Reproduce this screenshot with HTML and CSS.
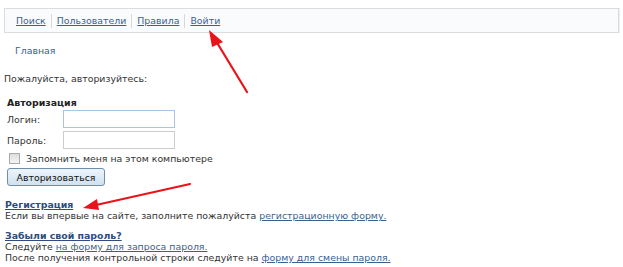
FILE: index.html
```html
<!DOCTYPE html>
<html lang="ru">
<head>
<meta charset="utf-8">
<link rel="stylesheet" href="styles.css">
</head>
<body>
<div class="page">
  <nav class="nav">
    <a href="#">Поиск</a><span class="sep"></span>
    <a href="#">Пользователи</a><span class="sep"></span>
    <a href="#">Правила</a><span class="sep"></span>
    <a href="#">Войти</a>
  </nav>
  <div class="crumb"><a href="#">Главная</a></div>
  <p class="intro">Пожалуйста, авторизуйтесь:</p>
  <form class="login">
    <div class="legend">Авторизация</div>
    <div class="row"><label class="lbl">Логин:</label><input class="field field-active" type="text"></div>
    <div class="row"><label class="lbl">Пароль:</label><input class="field" type="password"></div>
    <div class="remember"><span class="box"></span><span>Запомнить меня на этом компьютере</span></div>
    <button class="btn" type="button">Авторизоваться</button>
  </form>
  <div class="section">
    <a class="head" href="#">Регистрация</a>
    <div>Если вы впервые на сайте, заполните пожалуйста <a href="#">регистрационную форму.</a></div>
  </div>
  <div class="section">
    <a class="head" href="#">Забыли свой пароль?</a>
    <div>Следуйте <a href="#">на форму для запроса пароля.</a></div>
    <div>После получения контрольной строки следуйте на <a href="#">форму для смены пароля.</a></div>
  </div>
  <svg class="arrows" width="623" height="267" viewBox="0 0 623 267">
    <line x1="247" y1="92" x2="216" y2="41" stroke="#e8141a" stroke-width="2.2" stroke-linecap="round"/>
    <polygon points="209,30 223,42 212,47" fill="#e8141a"/>
    <line x1="190" y1="184" x2="96" y2="205" stroke="#e8141a" stroke-width="2.2" stroke-linecap="round"/>
    <polygon points="83,208 97,199 99,210" fill="#e8141a"/>
  </svg>
</div>
</body>
</html>
```
FILE: styles.css
```css
html, body {
  margin: 0;
  padding: 0;
  background: #fff;
}
.page {
  position: relative;
  width: 623px;
  height: 267px;
  overflow: hidden;
  font-family: "DejaVu Sans", Verdana, sans-serif;
  font-size: 9.4px;
  color: #333;
  line-height: 11px;
}
a {
  color: #3d5f8f;
  text-decoration: underline;
}
.nav {
  margin: 8px 4px 0 4px;
  height: 23px;
  border: 1px solid #dcdcdc;
  box-shadow: 1px 0 0 #eee;
  background: #fafbfd;
  display: flex;
  align-items: center;
  padding-left: 11px;
}
.sep {
  width: 1px;
  height: 14px;
  background: #d8d8d8;
  margin: 0 5px;
}
.crumb {
  padding: 12px 0 0 15px;
  height: 12px;
}
.crumb a {
  text-decoration: none;
}
.intro {
  margin: 16px 0 0 4px;
}
.login {
  margin: 13px 0 0 7px;
}
.legend {
  font-weight: bold;
  color: #222;
}
.row {
  display: flex;
  align-items: center;
  height: 20px;
  margin-top: 1px;
}
.lbl {
  width: 56px;
}
.field {
  box-sizing: border-box;
  width: 112px;
  height: 18px;
  border: 1px solid #ccc;
  margin: 0;
  padding: 0;
  background: #fff;
}
.field-active {
  border-color: #a9c6e0;
}
.remember {
  display: flex;
  align-items: center;
  gap: 6px;
  margin: 1px 0 0 2px;
  height: 14px;
}
.box {
  width: 9px;
  height: 9px;
  border: 1px solid #aaa;
  background: linear-gradient(#ddd, #f4f4f4);
}
.btn {
  display: block;
  margin-top: 3px;
  width: 98px;
  height: 18px;
  padding: 0;
  font-family: inherit;
  font-size: 9.4px;
  color: #111;
  border: 1px solid #6c8fb0;
  border-radius: 3px;
  background: linear-gradient(#eef5fb, #cfe0ee);
}
.section {
  margin: 13px 0 0 5px;
}
.section + .section {
  margin-top: 9px;
}
.head {
  font-weight: bold;
  color: #2d4d7c;
}
.arrows {
  position: absolute;
  left: 0;
  top: 0;
  pointer-events: none;
}
```
